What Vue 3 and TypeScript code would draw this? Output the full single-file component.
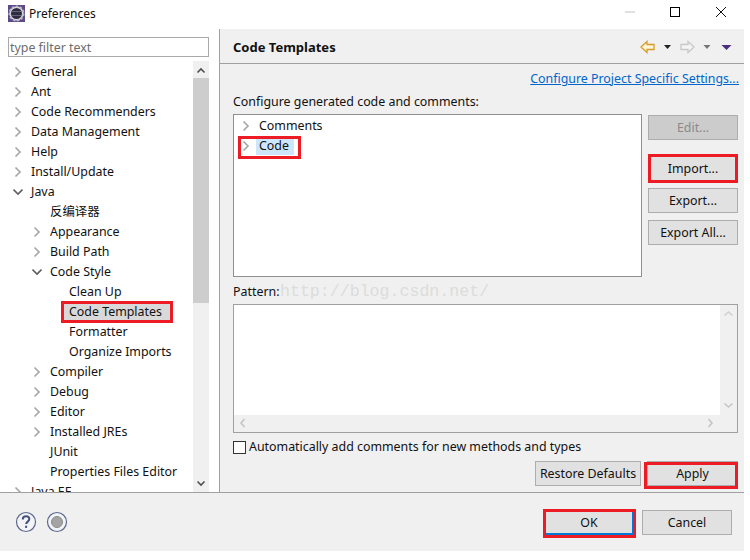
<script setup lang="ts">
interface Row { label: string; depth: number; arrow?: 'right' | 'down'; marked?: boolean }
const rows: Row[] = [
  { label: 'General', depth: 0, arrow: 'right' },
  { label: 'Ant', depth: 0, arrow: 'right' },
  { label: 'Code Recommenders', depth: 0, arrow: 'right' },
  { label: 'Data Management', depth: 0, arrow: 'right' },
  { label: 'Help', depth: 0, arrow: 'right' },
  { label: 'Install/Update', depth: 0, arrow: 'right' },
  { label: 'Java', depth: 0, arrow: 'down' },
  { label: '反编译器', depth: 1 },
  { label: 'Appearance', depth: 1, arrow: 'right' },
  { label: 'Build Path', depth: 1, arrow: 'right' },
  { label: 'Code Style', depth: 1, arrow: 'down' },
  { label: 'Clean Up', depth: 2 },
  { label: 'Code Templates', depth: 2, marked: true },
  { label: 'Formatter', depth: 2 },
  { label: 'Organize Imports', depth: 2 },
  { label: 'Compiler', depth: 1, arrow: 'right' },
  { label: 'Debug', depth: 1, arrow: 'right' },
  { label: 'Editor', depth: 1, arrow: 'right' },
  { label: 'Installed JREs', depth: 1, arrow: 'right' },
  { label: 'JUnit', depth: 1 },
  { label: 'Properties Files Editor', depth: 1 },
  { label: 'Java EE', depth: 0, arrow: 'right' },
]
function indent(d: number): string {
  return `${13 + d * 19}px`
}
</script>

<template>
  <div class="dialog">
    <header class="titlebar">
      <svg class="app-icon" width="17" height="17" viewBox="0 0 17 17">
        <rect x="0" y="0" width="17" height="17" fill="#5c4a86" />
        <circle cx="8.5" cy="8.5" r="7" fill="#e2e2e8" stroke="#b8b8c4" stroke-width="2" stroke-dasharray="2.500 1.500" />
        <circle cx="8.5" cy="8.5" r="5.500" fill="#2e2c3e" />
        <path d="M3.500 6.500h10M3.500 10.500h10" stroke="#8a88a0" stroke-width="1" opacity="0.6" />
      </svg>
      <span class="title">Preferences</span>
      <div class="winbtns">
        <svg width="101" height="12" viewBox="0 0 101 12">
          <path d="M0 6h10" stroke="#c4c4c4" fill="none" />
          <rect x="45.5" y="1.5" width="9" height="9" stroke="#000" fill="none" />
          <path d="M91 1l10 10M101 1l-10 10" stroke="#111" fill="none" />
        </svg>
      </div>
    </header>

    <div class="main">
      <aside class="side">
        <input class="filter" placeholder="type filter text" />
        <div class="treewrap">
          <ul class="tree">
            <li v-for="r in rows" :key="r.label" class="row" :style="{ paddingLeft: indent(r.depth) }">
              <svg v-if="r.arrow === 'right'" class="tw" width="10" height="12" viewBox="0 0 10 12">
                <path d="M2.5 1.5L7 6l-4.5 4.5" fill="none" stroke="#a8a8a8" stroke-width="1.7" />
              </svg>
              <svg v-else-if="r.arrow === 'down'" class="tw" width="10" height="12" viewBox="0 0 10 12">
                <path d="M0.5 3.5L5 8l4.5-4.5" fill="none" stroke="#606060" stroke-width="1.6" />
              </svg>
              <span v-else class="tw"></span>
              <span class="lbl" :class="{ marked: r.marked }">{{ r.label }}</span>
            </li>
          </ul>
          <div class="vbar">
            <svg class="sa" width="16" height="17" viewBox="0 0 16 17">
              <path d="M4.5 11.5L8 8l3.5 3.5" fill="none" stroke="#505050" stroke-width="1.6" />
            </svg>
            <div class="thumb"></div>
            <svg class="sa end" width="16" height="17" viewBox="0 0 16 17">
              <path d="M4.5 6.5L8 10l3.5-3.5" fill="none" stroke="#505050" stroke-width="1.6" />
            </svg>
          </div>
        </div>
      </aside>

      <section class="content">
        <div class="head">
          <h1>Code Templates</h1>
          <svg width="92" height="14" viewBox="0 0 92 14">
            <path d="M1 7l6-5.5V4.5h7v5H7v3z" fill="#fff6d8" stroke="#d89b2c" stroke-width="1.3" />
            <path d="M24 5h7l-3.500 4z" fill="#222" />
            <path d="M54 7l-6-5.500V4.500h-7v5h7v3z" fill="#f4f4f4" stroke="#c8c8c8" stroke-width="1.300" />
            <path d="M63.500 5h7l-3.500 4z" fill="#777" />
            <path d="M81.500 5h10l-5 5z" fill="#4b2f7e" />
          </svg>
        </div>
        <div class="body">
          <div class="linkline"><a class="link">Configure Project Specific Settings...</a></div>
          <div class="cap">Configure generated code and comments:</div>
          <div class="upper">
            <div class="box">
              <div class="trow">
                <svg class="tw" width="10" height="12" viewBox="0 0 10 12"><path d="M2.500 1.500L7 6l-4.500 4.500" fill="none" stroke="#a8a8a8" stroke-width="1.700" /></svg>
                <span>Comments</span>
              </div>
              <div class="trow codeline">
                <svg class="tw" width="10" height="12" viewBox="0 0 10 12"><path d="M2.500 1.500L7 6l-4.500 4.500" fill="none" stroke="#a8a8a8" stroke-width="1.700" /></svg>
                <span class="sel">Code</span>
              </div>
            </div>
            <div class="btncol">
              <button class="btn disabled">Edit...</button>
              <button class="btn import">Import...</button>
              <button class="btn export">Export...</button>
              <button class="btn">Export All...</button>
            </div>
          </div>
          <div class="patlabel">Pattern:<span class="mark">http://blog.csdn.net/</span></div>
          <div class="patbox">
            <div class="patrow">
              <div class="patarea"></div>
              <div class="patv">
                <svg width="17" height="18" viewBox="0 0 17 18"><path d="M4.500 10.500L8.500 7l4 3.500" fill="none" stroke="#d0d0d0" stroke-width="1.600" /></svg>
                <svg width="17" height="18" viewBox="0 0 17 18"><path d="M4.500 6.500L8.500 10l4-3.500" fill="none" stroke="#c4c4c4" stroke-width="1.600" /></svg>
              </div>
            </div>
            <div class="path">
              <svg width="17" height="16" viewBox="0 0 17 16"><path d="M10.500 4L7 8l3.500 4" fill="none" stroke="#c4c4c4" stroke-width="1.600" /></svg>
              <svg width="17" height="16" viewBox="0 0 17 16"><path d="M6.500 4L10 8l-3.500 4" fill="none" stroke="#c4c4c4" stroke-width="1.600" /></svg>
            </div>
          </div>
          <label class="check"><span class="cb"></span><span class="cbtext">Automatically add comments for new methods and types</span></label>
          <div class="applyrow">
            <button class="btn restore">Restore Defaults</button>
            <button class="btn apply">Apply</button>
          </div>
        </div>
      </section>
    </div>

    <footer class="foot">
      <div class="helps">
        <svg width="22" height="22" viewBox="0 0 22 22">
          <circle cx="11" cy="11" r="9.500" fill="#f4f4f8" stroke="#5a6a8c" stroke-width="1.200" />
          <path d="M7.800 8.500c0-2 1.400-3.200 3.300-3.200s3.200 1.100 3.200 2.800c0 2.500-3.100 2.500-3.100 5" fill="none" stroke="#44547c" stroke-width="2" />
          <rect x="10.100" y="14.700" width="2" height="2.200" fill="#44547c" />
        </svg>
        <svg width="22" height="22" viewBox="0 0 22 22">
          <circle cx="11" cy="11" r="9.500" fill="#f4f4f8" stroke="#5a6a8c" stroke-width="1.200" />
          <circle cx="11" cy="11" r="5.500" fill="#a4a4a4" stroke="#8c8c8c" />
        </svg>
      </div>
      <div class="footbtns">
        <button class="btn ok">OK</button>
        <button class="btn cancel">Cancel</button>
      </div>
    </footer>
  </div>
</template>

<style scoped>
.dialog {
  width: 744px;
  height: 551px;
  display: flex;
  flex-direction: column;
  font-family: "Noto Sans", "Noto Sans CJK SC", sans-serif;
  font-size: 12.4px;
  color: #111;
  background: #f0f0f0;
}
.titlebar {
  height: 29px;
  flex: none;
  background: #fff;
  display: flex;
  align-items: center;
  padding-left: 8px;
  box-sizing: border-box;
}
.app-icon { flex: none; margin-top: -2px; }
.title { margin-left: 4px; font-size: 12px; margin-top: -2px; }
.winbtns { margin-left: auto; margin-right: 18px; height: 12px; margin-top: -5px; line-height: 0; }
.main { flex: 1; display: flex; min-height: 0; }
.side {
  flex: none;
  background: #fff;
  border-right: 1px solid #a0a0a0;
  padding: 8px 10px 0 8px;
  box-sizing: content-box;
  width: 201px;
  display: flex;
  flex-direction: column;
}
.filter {
  height: 20px;
  box-sizing: border-box;
  border: 1px solid #a9a9a9;
  padding: 0 1px;
  font: inherit;
  outline: none;
  width: 201px;
  flex: none;
}
.filter::placeholder { color: #6d6d6d; opacity: 1; }
.treewrap { flex: 1; display: flex; margin: 4px 0 0 -8px; width: 209px; min-height: 0; overflow: hidden; }
.tree { list-style: none; margin: 0; padding: 1px 0 0; flex: 1; min-width: 0; }
.row { height: 20px; display: flex; align-items: center; white-space: nowrap; }
.tw { width: 10px; height: 12px; flex: none; margin-right: 8px; }
.lbl { line-height: 18px; }
.lbl.marked {
  background: #d9d9d9;
  line-height: 16px;
  outline: 3px solid #ed1c24;
  padding: 0 8px 0 5px;
  margin-left: -5px;
}
.vbar { width: 16px; flex: none; background: #f0f0f0; display: flex; flex-direction: column; }
.sa { flex: none; display: block; }
.sa.end { margin-top: auto; }
.thumb { height: 225px; background: #cdcdcd; }
.content { flex: 1; min-width: 0; display: flex; flex-direction: column; }
.head {
  height: 35px;
  flex: none;
  box-sizing: border-box;
  border-bottom: 1px solid #a0a0a0;
  display: flex;
  align-items: center;
  justify-content: space-between;
  padding: 2px 12px 0 13px;
}
h1 { margin: 0; font-size: 13px; font-weight: 700; }
.body { padding: 0 6px 0 13px; display: flex; flex-direction: column; flex: 1; min-height: 0; }
.linkline { height: 29px; display: flex; align-items: center; justify-content: flex-end; margin-right: -1px; }
.link { color: #0066cc; text-decoration: underline; }
.cap { height: 20px; line-height: 18px; margin-bottom: 1px; }
.upper { display: flex; justify-content: space-between; height: 163px; }
.box {
  width: 409px;
  height: 163px;
  box-sizing: border-box;
  border: 1px solid #8f8f8f;
  background: #fff;
  padding: 1px 0 0 7px;
}
.trow { height: 20px; display: flex; align-items: center; line-height: 18px; }
.codeline { position: relative; }
.codeline::after {
  content: "";
  position: absolute;
  left: -3px;
  top: 0;
  width: 63px;
  height: 23px;
  box-sizing: border-box;
  border: 3px solid #ed1c24;
}
.sel { background: #cde6fb; padding: 0 5px 0 3px; margin-left: -3px; }
.btncol { width: 90px; display: flex; flex-direction: column; padding-top: 1px; }
.btn {
  position: relative;
  height: 25px;
  box-sizing: border-box;
  border: 1px solid #adadad;
  background: #e1e1e1;
  color: #111;
  font: inherit;
  padding: 0;
  width: 90px;
  flex: none;
}
.btn.disabled { background: #cccccc; color: #8a8a8a; }
.import::after, .apply::after, .ok::after {
  content: "";
  position: absolute;
  border: 3px solid #ed1c24;
  box-sizing: border-box;
}
.import::after { inset: -3px -1px; }
.apply::after { inset: 0 -1px -4px -4px; }
.ok::after { inset: -2px -4px -5px -3px; }
.import { margin-top: 16px; }
.export { margin-top: 7px; margin-bottom: 7px; }
.patlabel { position: relative; height: 27px; line-height: 30px; }
.mark {
  position: absolute;
  left: 47px;
  top: 0;
  font-family: "Liberation Mono", monospace;
  font-size: 16.6px;
  color: #dcdcdc;
}
.patbox { height: 129px; box-sizing: border-box; border: 1px solid #a0a0a0; display: flex; flex-direction: column; flex: none; }
.patrow { flex: 1; display: flex; min-height: 0; }
.patarea { flex: 1; background: #fff; }
.patv { width: 17px; flex: none; display: flex; flex-direction: column; justify-content: space-between; }
.path { height: 17px; flex: none; display: flex; justify-content: space-between; padding: 0 18px 0 0; }
.check { display: flex; align-items: center; height: 14px; margin-top: 7px; white-space: nowrap; }
.cb { width: 13px; height: 13px; box-sizing: border-box; border: 1px solid #333; background: #fff; margin-right: 3px; flex: none; }
.cbtext { margin-top: -2px; }
.applyrow { display: flex; justify-content: flex-end; align-items: center; margin-top: 7px; gap: 6px; }
.restore { width: 106px; }
.apply { width: 91px; }
.foot {
  height: 59px;
  flex: none;
  box-sizing: border-box;
  border-top: 1px solid #a0a0a0;
  display: flex;
  align-items: center;
  justify-content: space-between;
  padding: 0 12px 0 15px;
}
.helps { display: flex; gap: 9px; line-height: 0; margin-top: -1px; }
.footbtns { display: flex; gap: 8px; margin-top: 1px; }
.ok { width: 89px; border-bottom: 2px solid #0078d7; border-right: 2px solid #0078d7; }
.cancel { width: 90px; }
</style>

<style>
html, body { background: #fff; margin: 0; }
</style>
